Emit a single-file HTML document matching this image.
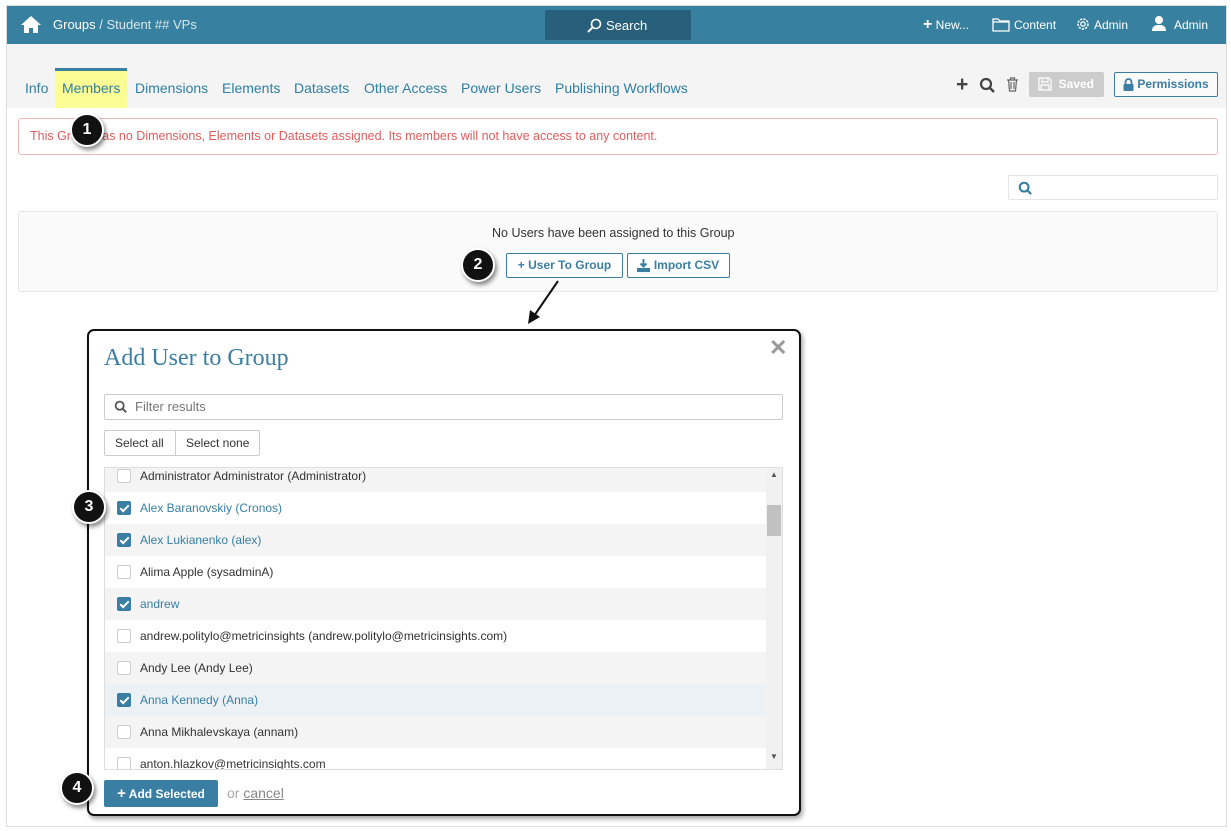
<!DOCTYPE html>
<html><head><style>
*{box-sizing:border-box;margin:0;padding:0}
body{width:1231px;height:831px;background:#fff;font-family:"Liberation Sans",sans-serif;position:relative;overflow:hidden;font-size:13px}
.abs{position:absolute}
.frame{left:6px;top:5px;width:1221px;height:822px;border:1px solid #ddd;background:#fff}
.top{left:7px;top:6px;width:1219px;height:38px;background:#38809f;color:#fff}
.gray{left:7px;top:44px;width:1219px;height:64px;background:#f4f4f4}
.tab{top:80px;color:#2f7fa3;font-size:14px}
.badge{width:34px;height:34px;border-radius:50%;background:#111;color:#fff;font-weight:bold;font-size:16px;text-align:center;line-height:30px;box-shadow:2px 3px 4px rgba(0,0,0,.45);border:2px solid #fff}
.row{position:absolute;left:0;width:661px;height:32px;font-size:12px;line-height:32px;padding-left:35px;color:#333}
.cb{position:absolute;left:12px;top:9px;width:14px;height:14px;border:1px solid #ccc;border-radius:2px;background:#fff}
.cb.on{background:#3a7fa3;border-color:#3a7fa3}
.cb.on:after{content:"";position:absolute;left:4px;top:1px;width:3px;height:7px;border:solid #fff;border-width:0 2px 2px 0;transform:rotate(45deg)}
.sel{color:#3a7fa3}
.btn{border:1px solid #3a7fa3;border-radius:2px;color:#3a7fa3;font-weight:bold;font-size:12px;background:#fff;text-align:center}
</style></head><body>
<div class="abs frame"></div>
<div class="abs top">
 <svg class="abs" style="left:13px;top:9px" width="22" height="18" viewBox="0 0 22 18"><path d="M11 1L1 10h3v8h5v-5h4v5h5v-8h3z" fill="#fff"/></svg>
 <div class="abs" style="left:46px;top:11px;font-size:13px">Groups <span style="color:#d8e7ee">/ Student ## VPs</span></div>
 <div class="abs" style="left:538px;top:4px;width:146px;height:30px;background:#285f7a;border-radius:2px;font-size:13px">
  <svg class="abs" style="left:42px;top:8px" width="15" height="15" viewBox="0 0 15 15"><circle cx="9" cy="6" r="4.5" fill="none" stroke="#fff" stroke-width="1.6"/><line x1="5.8" y1="9.2" x2="1" y2="14" stroke="#fff" stroke-width="2"/></svg>
  <span class="abs" style="left:61px;top:8px">Search</span></div>
 <div class="abs" style="left:916px;top:10px;font-size:12px"><b style="font-size:16px">+</b> New...</div>
 <svg class="abs" style="left:985px;top:11px" width="18" height="15" viewBox="0 0 18 15"><path d="M1 2h5l2 2h9v10H1z M1 5h16" fill="none" stroke="#fff" stroke-width="1.3"/></svg>
 <div class="abs" style="left:1007px;top:12px;font-size:12px">Content</div>
 <svg class="abs" style="left:1068px;top:10px" width="16" height="16" viewBox="0 0 16 16"><circle cx="8" cy="8" r="5" fill="none" stroke="#fff" stroke-width="1.5" stroke-dasharray="2.2 1.2"/><circle cx="8" cy="8" r="2.2" fill="none" stroke="#fff" stroke-width="1.3"/></svg>
 <div class="abs" style="left:1087px;top:12px;font-size:12px">Admin</div>
 <svg class="abs" style="left:1144px;top:9px" width="16" height="17" viewBox="0 0 16 17"><circle cx="8" cy="5" r="4" fill="#fff"/><path d="M1 16c0-5 3-6 7-6s7 1 7 6z" fill="#fff"/></svg>
 <div class="abs" style="left:1167px;top:12px;font-size:12px">Admin</div>
</div>
<div class="abs gray"></div>
<div class="abs" style="left:55px;top:68px;width:72px;height:40px;background:#fdfd96;border-top:3px solid #38809f"></div>
<div class="abs tab" style="left:25px">Info</div>
<div class="abs tab" style="left:62px">Members</div>
<div class="abs tab" style="left:135px">Dimensions</div>
<div class="abs tab" style="left:222px">Elements</div>
<div class="abs tab" style="left:294px">Datasets</div>
<div class="abs tab" style="left:364px">Other Access</div>
<div class="abs tab" style="left:461px">Power Users</div>
<div class="abs tab" style="left:555px">Publishing Workflows</div>
<div class="abs" style="left:956px;top:73px;font-size:21px;font-weight:bold;color:#444">+</div>
<svg class="abs" style="left:979px;top:77px" width="16" height="16" viewBox="0 0 16 16"><circle cx="7" cy="7" r="5" fill="none" stroke="#444" stroke-width="2.2"/><line x1="10.5" y1="10.5" x2="15" y2="15" stroke="#444" stroke-width="2.5"/></svg>
<svg class="abs" style="left:1006px;top:77px" width="13" height="15" viewBox="0 0 13 15"><path d="M1 3h11M4.5 3V1h4v2M2.5 3l1 11h6l1-11M5 5v7M8 5v7" fill="none" stroke="#666" stroke-width="1.2"/></svg>
<div class="abs" style="left:1029px;top:72px;width:75px;height:25px;background:#ccc;border-radius:2px;color:#fff;font-weight:bold;font-size:12px;line-height:25px;text-align:right;padding-right:10px">Saved
 <svg class="abs" style="left:9px;top:5px" width="14" height="14" viewBox="0 0 14 14"><path d="M1 1h10l2 2v10H1z M4 1v4h6V1 M3 8h8v5H3z" fill="none" stroke="#fff" stroke-width="1.2"/></svg></div>
<div class="abs btn" style="left:1114px;top:72px;width:104px;height:25px;line-height:23px;background:#fafafa;padding-left:14px">Permissions
 <svg class="abs" style="left:8px;top:5px" width="11" height="13" viewBox="0 0 11 13"><path d="M2.5 6V4a3 3 0 016 0v2" fill="none" stroke="#3a7fa3" stroke-width="1.8"/><rect x="0.5" y="6" width="10" height="7" rx="1" fill="#3a7fa3"/></svg></div>
<div class="abs" style="left:18px;top:118px;width:1200px;height:37px;border:1px solid #f2b8b8;border-radius:3px;color:#e05d5d;font-size:12.5px;line-height:35px;padding-left:11px">This Group has no Dimensions, Elements or Datasets assigned. Its members will not have access to any content.</div>
<div class="abs badge" style="left:70px;top:113px">1</div>
<div class="abs" style="left:1008px;top:175px;width:210px;height:25px;border:1px solid #e5e5e5;border-radius:2px">
 <svg class="abs" style="left:9px;top:5px" width="14" height="14" viewBox="0 0 16 16"><circle cx="7" cy="7" r="5" fill="none" stroke="#38809f" stroke-width="2.4"/><line x1="10.5" y1="10.5" x2="15" y2="15" stroke="#38809f" stroke-width="2.6"/></svg></div>
<div class="abs" style="left:18px;top:211px;width:1200px;height:81px;border:1px solid #e5e5e5;border-radius:3px;background:#fafafa"></div>
<div class="abs" style="left:492px;top:226px;font-size:12.5px;color:#333">No Users have been assigned to this Group</div>
<div class="abs btn" style="left:506px;top:253px;width:117px;height:25px;line-height:23px">+ User To Group</div>
<div class="abs btn" style="left:627px;top:253px;width:103px;height:25px;line-height:23px;padding-left:16px">Import CSV
 <svg class="abs" style="left:9px;top:5px" width="13" height="13" viewBox="0 0 13 13"><path d="M6.5 0v7M3.5 4.5l3 3 3-3" fill="none" stroke="#3a7fa3" stroke-width="2"/><rect x="0" y="9" width="13" height="4" fill="#3a7fa3"/></svg></div>
<div class="abs badge" style="left:461px;top:248px">2</div>
<svg class="abs" style="left:520px;top:278px" width="45" height="50"><line x1="38" y1="3" x2="14" y2="38" stroke="#111" stroke-width="2"/><path d="M8 46l2-14 10 7z" fill="#111"/></svg>
<div class="abs" style="left:87px;top:329px;width:714px;height:487px;border:2px solid #111;border-radius:7px;background:#fff;box-shadow:2px 3px 5px rgba(0,0,0,.35)">
 <div class="abs" style="left:15px;top:14px;font-family:'Liberation Serif',serif;font-size:24px;color:#3a7fa3">Add User to Group</div>
 <div class="abs" style="left:680px;top:4px;font-size:22px;color:#999;font-weight:bold">✕</div>
 <div class="abs" style="left:15px;top:63px;width:679px;height:26px;border:1px solid #ccc;border-radius:2px;font-size:13px;color:#777;line-height:24px;padding-left:30px">
  <svg class="abs" style="left:9px;top:5px" width="13" height="13" viewBox="0 0 16 16"><circle cx="7" cy="7" r="5" fill="none" stroke="#555" stroke-width="2.2"/><line x1="10.5" y1="10.5" x2="15" y2="15" stroke="#555" stroke-width="2.5"/></svg>Filter results</div>
 <div class="abs" style="left:15px;top:99px;width:156px;height:26px;border:1px solid #ccc;border-radius:2px;font-size:12px;color:#333;line-height:24px"><span style="padding-left:10px">Select all</span><span class="abs" style="left:70px;top:0;height:24px;border-left:1px solid #ccc;padding-left:10px">Select none</span></div>
 <div class="abs" style="left:15px;top:136px;width:679px;height:303px;border:1px solid #ddd;overflow:hidden">
  <div class="row" style="top:-8px;background:#f4f4f4"><span class="cb"></span>Administrator Administrator (Administrator)</div>
  <div class="row sel" style="top:24px;background:#fff"><span class="cb on"></span>Alex Baranovskiy (Cronos)</div>
  <div class="row sel" style="top:56px;background:#f4f4f4"><span class="cb on"></span>Alex Lukianenko (alex)</div>
  <div class="row" style="top:88px;background:#fff"><span class="cb"></span>Alima Apple (sysadminA)</div>
  <div class="row sel" style="top:120px;background:#f4f4f4"><span class="cb on"></span>andrew</div>
  <div class="row" style="top:152px;background:#fff"><span class="cb"></span>andrew.politylo@metricinsights (andrew.politylo@metricinsights.com)</div>
  <div class="row" style="top:184px;background:#f4f4f4"><span class="cb"></span>Andy Lee (Andy Lee)</div>
  <div class="row sel" style="top:216px;background:#ebf1f5"><span class="cb on"></span>Anna Kennedy (Anna)</div>
  <div class="row" style="top:248px;background:#f4f4f4"><span class="cb"></span>Anna Mikhalevskaya (annam)</div>
  <div class="row" style="top:280px;background:#fff"><span class="cb"></span>anton.hlazkov@metricinsights.com</div>
  <div class="abs" style="left:661px;top:0;width:16px;height:301px;background:#f1f1f1"><div class="abs" style="left:1px;top:37px;width:14px;height:31px;background:#c1c1c1"></div><div class="abs" style="left:4px;top:2px;font-size:8px;color:#555">▲</div><div class="abs" style="left:4px;top:284px;font-size:8px;color:#555">▼</div></div>
 </div>
 <div class="abs" style="left:15px;top:449px;width:114px;height:27px;background:#3a7fa3;border-radius:2px;color:#fff;font-weight:bold;font-size:12px;line-height:27px;text-align:center"><b style="font-size:15px">+</b> Add Selected</div>
 <div class="abs" style="left:138px;top:454px;font-size:14px;color:#aaa">or <span style="color:#888;text-decoration:underline">cancel</span></div>
</div>
<div class="abs badge" style="left:72px;top:490px">3</div>
<div class="abs badge" style="left:60px;top:771px">4</div>
</body></html>
